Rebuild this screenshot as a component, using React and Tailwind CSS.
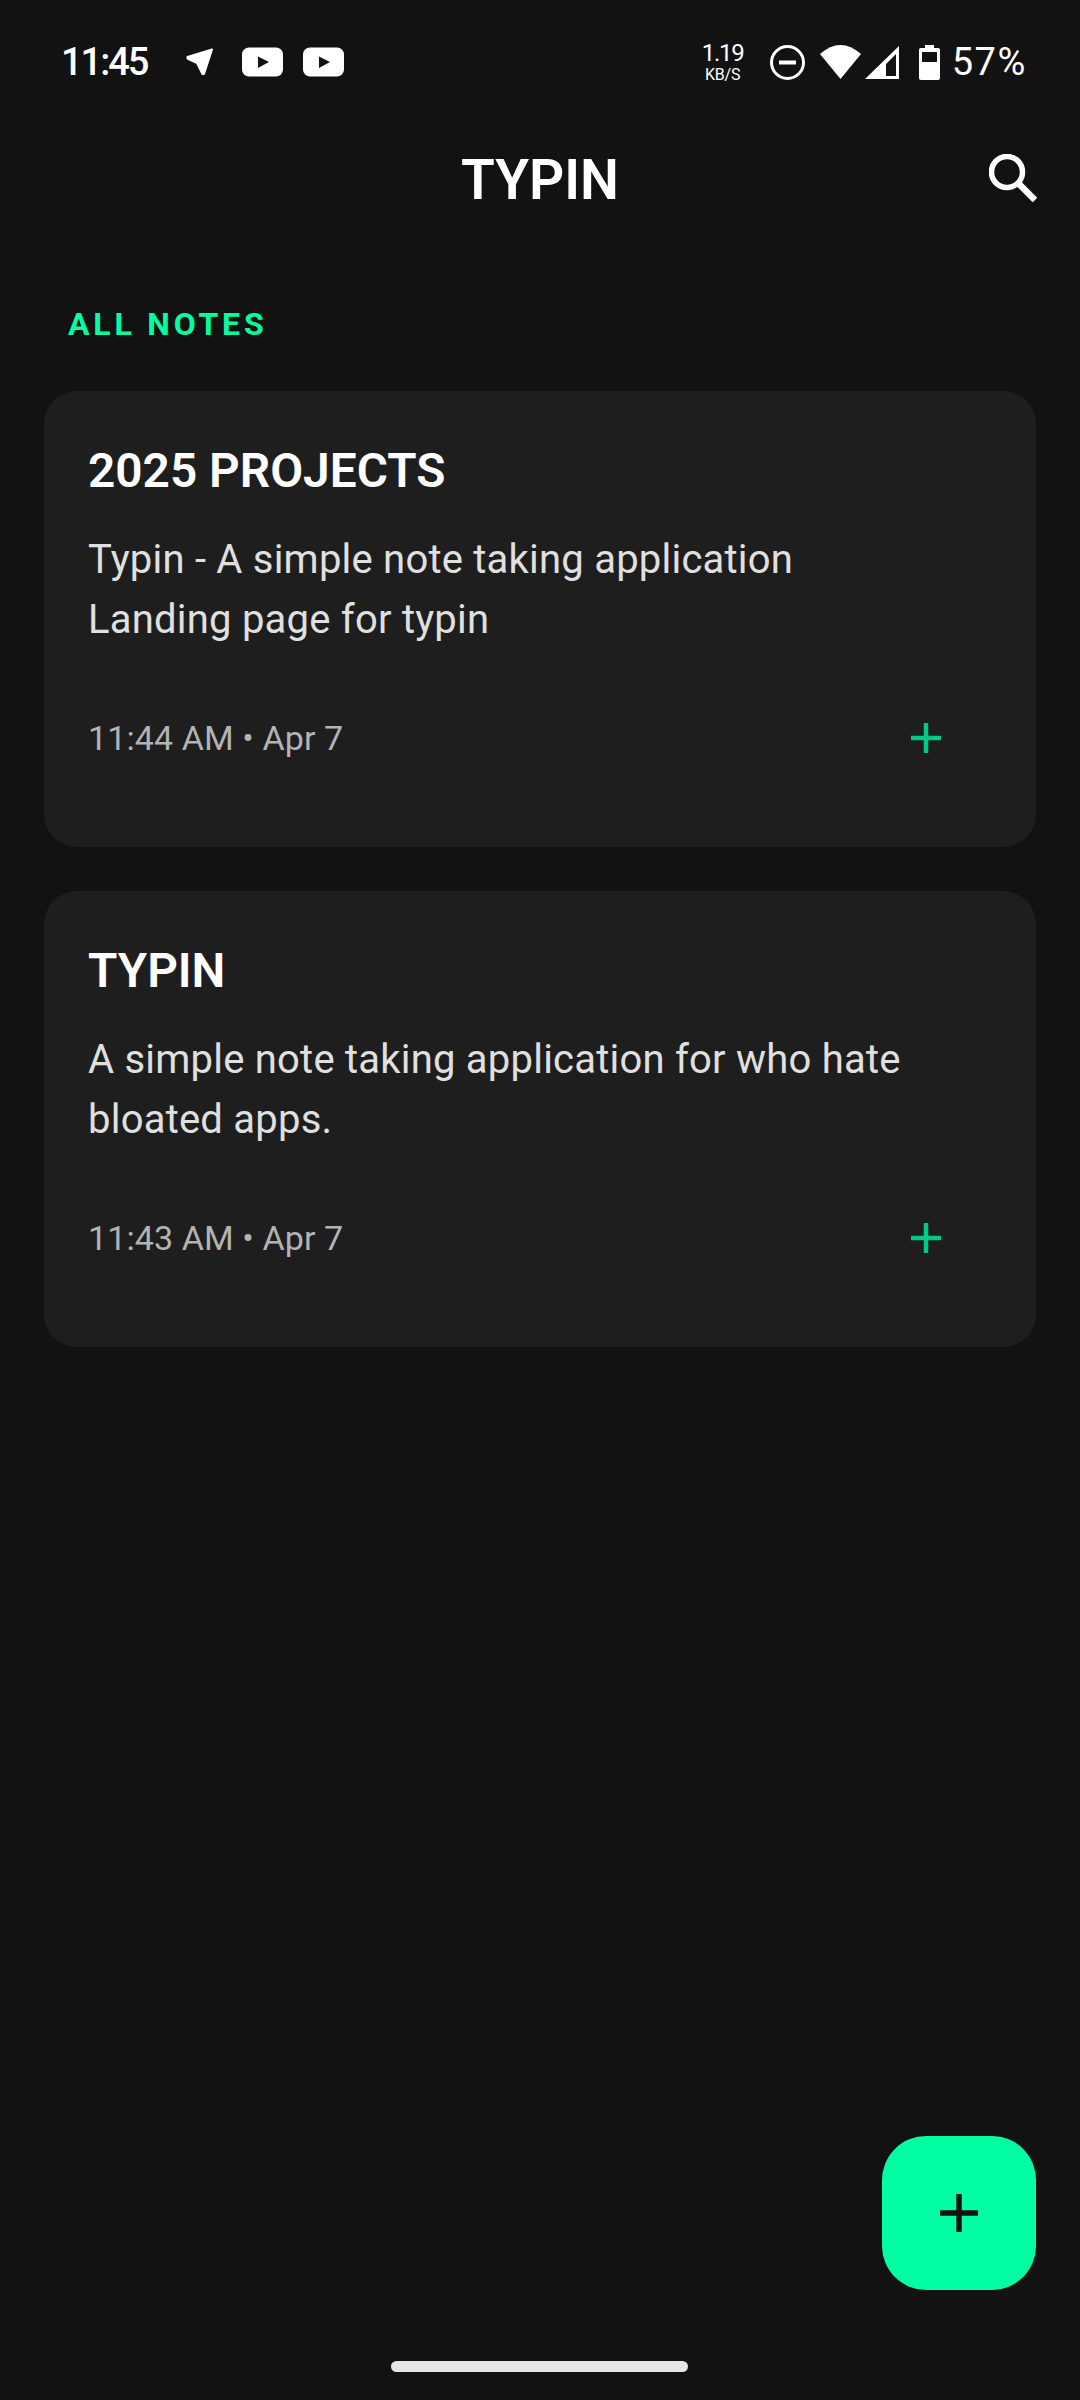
const FONT = { fontFamily: 'Roboto, sans-serif' };

function Plus({ size, stroke, color }) {
  const mid = size / 2;
  return (
    <svg width={size} height={size} viewBox={`0 0 ${size} ${size}`} fill={color}>
      <rect x={mid - stroke / 2} y="0" width={stroke} height={size} />
      <rect x="0" y={mid - stroke / 2} width={size} height={stroke} />
    </svg>
  );
}

function YouTube() {
  return (
    <svg width="41" height="30" viewBox="0 0 41 30">
      <rect width="41" height="29" y="0.5" rx="7" fill="#fff" />
      <path d="M16 9.5 L27 15 L16 21 Z" fill="#121212" />
    </svg>
  );
}

function StatusBar() {
  return (
    <div className="flex h-[76px] items-start justify-between pl-[61px] pr-[53px] pt-[40px] text-white">
      <div className="flex items-center">
        <span className="w-[88px] text-[38px] leading-[44px] font-medium tracking-[-2px]">11:45</span>
        <svg className="ml-[37px]" width="28" height="28" viewBox="0 0 28 28">
          <path d="M1.5 9 L26 1.5 L18 26 L16.5 26 L11 15 L1.5 10.5 Z" fill="#fff" stroke="#fff" strokeWidth="2" strokeLinejoin="round" />
        </svg>
        <span className="ml-[28px] flex"><YouTube /></span>
        <span className="ml-[20px] flex"><YouTube /></span>
      </div>
      <div className="flex items-center">
        <div className="flex flex-col items-center leading-none">
          <span className="text-[24px] leading-[24px] tracking-[-1.2px]">1.19</span>
          <span className="mt-[2px] text-[16px] leading-[16px] tracking-[-0.2px]">KB/S</span>
        </div>
        <svg className="ml-[26px]" width="35" height="35" viewBox="0 0 35 35" fill="none">
          <circle cx="17.5" cy="17.5" r="16" stroke="#fff" strokeWidth="3" />
          <rect x="9" y="15.5" width="17" height="4" fill="#fff" />
        </svg>
        <svg className="ml-[15px]" width="41" height="34" viewBox="0 0 41 34">
          <path d="M0 9 Q20.5 -9 41 9 L20.5 34 Z" fill="#fff" />
        </svg>
        <svg className="ml-[4px]" width="34" height="33" viewBox="0 0 34 33">
          <path d="M0 33 L34 0 L34 33 Z M21 30 L31 30 L31 8 L21 18 Z" fill="#fff" fillRule="evenodd" />
        </svg>
        <svg className="ml-[20px]" width="21" height="35" viewBox="0 0 21 35">
          <path d="M6 0 H15 V3 H19 Q21 3 21 5 V33 Q21 35 19 35 H2 Q0 35 0 33 V5 Q0 3 2 3 H6 Z M3 7 V17 H18 V7 Z" fill="#fff" fillRule="evenodd" />
        </svg>
        <span className="ml-[12px] text-[38px] leading-[44px] tracking-[1.6px]">57%</span>
      </div>
    </div>
  );
}

function Note({ title, lines, time }) {
  return (
    <article className="h-[456px] rounded-[33px] bg-[#1e1e1e] px-[44px] pt-[54px]">
      <h2 className="text-[47.8px] leading-[52px] font-semibold text-white">{title}</h2>
      <p className="mt-[33px] text-[40px] leading-[60px] tracking-[0.22px] text-[#e0e0e0]">
        {lines.map((l) => <span key={l} className="block">{l}</span>)}
      </p>
      <div className="mt-[66px] flex items-center justify-between pr-[51px]">
        <span className="text-[34px] leading-[44px] tracking-[0.1px] text-[#b3b3b3]">{time}</span>
        <Plus size={30} stroke={4.5} color="#00c985" />
      </div>
    </article>
  );
}

export default function App() {
  return (
    <div style={FONT} className="relative h-[2400px] w-[1080px] overflow-hidden bg-[#121212]">
      <StatusBar />
      <header className="relative mt-[72px] flex h-[64px] items-center justify-center">
        <h1 className="text-[55px] leading-[64px] font-semibold text-white">TYPIN</h1>
        <svg className="absolute right-[43px] top-[6px]" width="48" height="48" viewBox="0 0 48 48" fill="none" stroke="#fff">
          <circle cx="18" cy="18" r="15.5" strokeWidth="5.5" />
          <path d="M29 29 L46 46" strokeWidth="6.5" />
        </svg>
      </header>
      <h3 className="ml-[68px] mt-[92px] text-[32px] leading-[40px] font-bold tracking-[3.8px] text-[#00ffa3]">ALL NOTES</h3>
      <main className="mt-[47px] flex flex-col gap-[44px] px-[44px]">
        <Note title="2025 PROJECTS" lines={['Typin - A simple note taking application', 'Landing page for typin']} time="11:44 AM • Apr 7" />
        <Note title="TYPIN" lines={['A simple note taking application for who hate', 'bloated apps.']} time="11:43 AM • Apr 7" />
      </main>
      <button className="absolute left-[882px] top-[2136px] flex h-[154px] w-[154px] items-center justify-center rounded-[44px] bg-[#00ffa3]">
        <Plus size={38} stroke={5.5} color="#121212" />
      </button>
      <div className="absolute left-[391px] top-[2361px] h-[11px] w-[297px] rounded-full bg-[#e6e6e6]" />
    </div>
  );
}
